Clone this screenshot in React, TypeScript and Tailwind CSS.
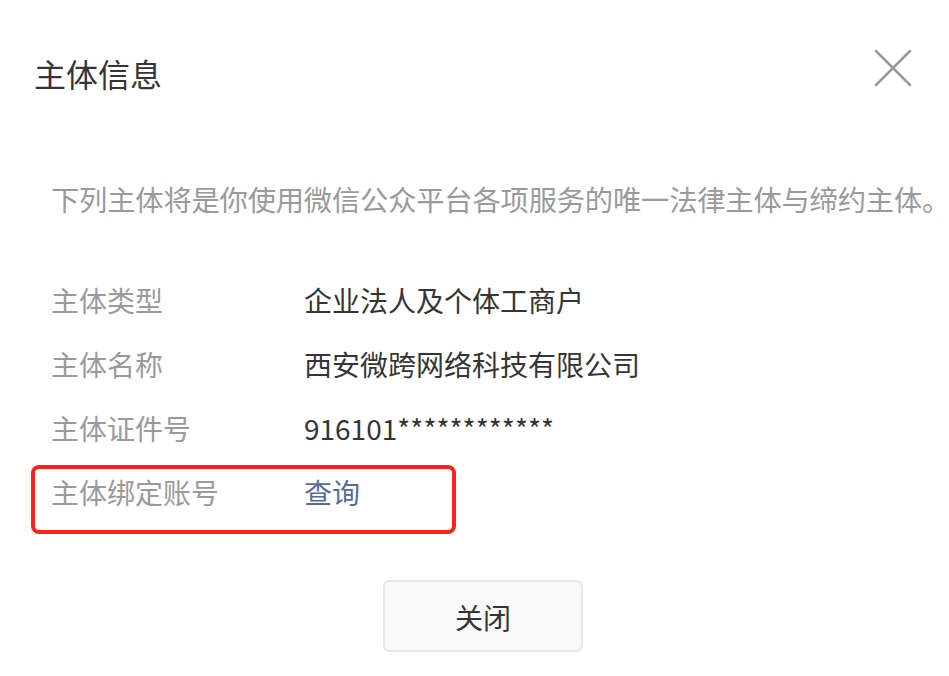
import React from "react";

const font = { fontFamily: '"Noto Sans CJK SC", "Noto Sans", sans-serif' };

export default function App() {
  const rows: { label: string; value: string; link?: boolean }[] = [
    { label: "主体类型", value: "企业法人及个体工商户" },
    { label: "主体名称", value: "西安微跨网络科技有限公司" },
    { label: "主体证件号", value: "916101************" },
    { label: "主体绑定账号", value: "查询", link: true },
  ];
  return (
    <div className="w-[949px] h-[676px] bg-white overflow-hidden" style={font}>
      <div className="flex items-start justify-between pt-[52px] pl-[34px] pr-[37px]">
        <div className="text-[32px] leading-[42px] text-[#353535]">主体信息</div>
        <svg width="38" height="38" viewBox="0 0 38 38" className="-mt-[3px]">
          <path d="M2 2 L36 36 M36 2 L2 36" stroke="#9a9a9a" strokeWidth="2.5" strokeLinecap="round" fill="none" />
        </svg>
      </div>
      <div className="mt-[85px] pl-[51px] text-[28.3px] leading-[40px] text-[#9a9a9a] whitespace-nowrap tracking-[-0.2px]">
        下列主体将是你使用微信公众平台各项服务的唯一法律主体与缔约主体<span className="inline-block w-[12px]">。</span>
      </div>
      <div className="mt-[49px]">
        {rows.map((r, i) => (
          <div key={i} className="relative flex h-[64px] items-center text-[28px] leading-[40px]">
            <div className="w-[304px] pl-[51px] text-[#9a9a9a]">{r.label}</div>
            <div className={r.link ? "text-[#576b95]" : "text-[#353535]"}>{r.value}</div>
            {i === 3 && (
              <div className="absolute left-[31px] top-[5px] w-[425px] h-[69px] border-[4px] border-[#fa2419] rounded-[8px]" />
            )}
          </div>
        ))}
      </div>
      <div className="mt-[56px] pl-[383px]">
        <button className="w-[200px] h-[72px] rounded-[7px] border-2 border-[#e3e7ea] bg-[#fafafa] text-[28px] leading-[40px] pt-[2px] text-[#353535]" style={font}>
          关闭
        </button>
      </div>
    </div>
  );
}
